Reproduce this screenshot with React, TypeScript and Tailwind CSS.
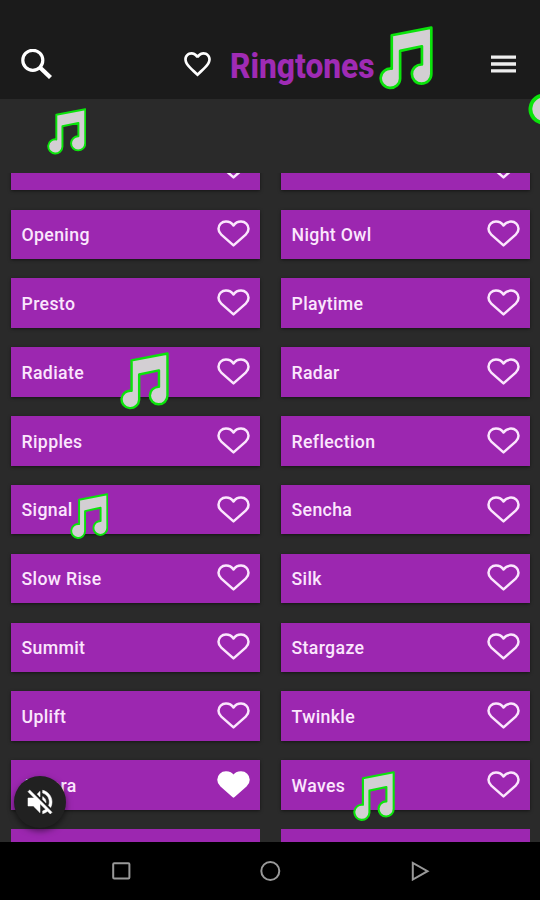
import { useState } from "react";
import { MdFavoriteBorder } from "react-icons/md";

const ringtones = [
  "Opening",
  "Night Owl",
  "Presto",
  "Playtime",
  "Radiate",
  "Radar",
  "Ripples",
  "Reflection",
  "Signal",
  "Sencha",
  "Slow Rise",
  "Silk",
  "Summit",
  "Stargaze",
  "Uplift",
  "Twinkle",
  "Aurora",
  "Waves",
];

function Heart({ filled = false }: { filled?: boolean }) {
  return (
    <svg
      viewBox="0 0 33 27"
      className="h-[27px] w-[33px] shrink-0"
      fill={filled ? "#fff" : "none"}
      stroke={filled ? "#fff" : "#fbe6fd"}
      strokeWidth="2.5"
      strokeLinejoin="round"
    >
      <path d="M16.5 25.4 L4.3 14.6 C2.3 12.8 1.5 11 1.5 8.7 C1.5 4.7 4.8 1.6 9 1.6 C12.2 1.6 14.7 3 16.5 5.5 C18.3 3 20.8 1.6 24 1.6 C28.2 1.6 31.5 4.7 31.5 8.7 C31.5 11 30.7 12.8 28.7 14.6 Z" />
    </svg>
  );
}

function Note({ className }: { className: string }) {
  return (
    <svg
      viewBox="25 33 161 193"
      preserveAspectRatio="none"
      className={`pointer-events-none absolute z-20 ${className}`}
    >
      <path
        d="M63 61 L181 38 V178 A29 29 0 1 1 153 149 V94 L88 108 V192 A29 29 0 1 1 63 162 Z"
        fill="#d3cfd3"
        stroke="#0be30b"
        strokeWidth="8"
        strokeLinejoin="round"
      />
    </svg>
  );
}

function MuteIcon() {
  return (
    <svg viewBox="0 0 24 24" className="size-[32px]" fill="#fff" stroke="#fff" strokeWidth="0.4">
      <path d="M16.5 12c0-1.77-1.02-3.29-2.5-4.03v2.21l2.45 2.45c.03-.2.05-.41.05-.63zm2.5 0c0 .94-.2 1.82-.54 2.64l1.51 1.51C20.63 14.91 21 13.5 21 12c0-4.28-2.99-7.86-7-8.77v2.06c2.89.86 5 3.54 5 6.71zM4.27 3 3 4.27 7.73 9H3v6h4l5 5v-6.73l4.25 4.25c-.67.52-1.42.93-2.25 1.18v2.06c1.38-.31 2.63-.95 3.69-1.81L19.73 21 21 19.73l-9-9L4.27 3zM12 4 9.91 6.09 12 8.18V4z" />
    </svg>
  );
}

function RingtoneCard({
  title,
  liked,
  onLike,
}: {
  title: string;
  liked: boolean;
  onLike: () => void;
}) {
  return (
    <div className="flex h-[49.4px] items-center justify-between bg-[#9c27b0] pr-[10px] pl-[10.5px] shadow-[0_1px_3px_rgba(0,0,0,0.5)]">
      <span className="pt-[1.5px] text-[17.7px] leading-6 font-medium tracking-[0.35px] text-[#fbe6fd]">
        {title}
      </span>
      <button onClick={onLike} className="pb-px">
        <Heart filled={liked} />
      </button>
    </div>
  );
}

export default function App() {
  const [liked, setLiked] = useState<string[]>(["Aurora"]);

  const toggle = (title: string) =>
    setLiked((prev) =>
      prev.includes(title) ? prev.filter((t) => t !== title) : [...prev, title]
    );

  return (
    <div className="relative flex h-[900px] w-[540px] flex-col overflow-hidden bg-[#2a2a2a] font-['Roboto',sans-serif]">
      {/* Header */}
      <header className="flex h-[98.5px] shrink-0 items-center bg-[#1b1b1b] pt-[30px] pr-[24px] pl-[21px]">
        <svg viewBox="0 0 31 30" className="h-[30px] w-[31px]" fill="none" stroke="#fff">
          <circle cx="11.8" cy="11.3" r="10" strokeWidth="3.2" />
          <path d="M19 18.5 L29.5 28.5" strokeWidth="4.3" />
        </svg>
        <MdFavoriteBorder className="ml-[129px] h-[32px] w-[33px] text-white" />
        <h1 className="ml-[15.5px] w-[146px] origin-left scale-x-[0.905] pt-[6px] text-[35px] leading-10 font-extrabold text-[#9f2bb4]">
          Ringtones
        </h1>
        <button className="mb-px ml-auto">
          <svg viewBox="0 0 25 18" className="h-[18px] w-[25px]" fill="none" stroke="#eee" strokeWidth="3.3">
            <path d="M0 2.2 H25 M0 9 H25 M0 15.8 H25" />
          </svg>
        </button>
      </header>

      {/* Ringtone list */}
      <main className="mt-[74px] flex h-[669px] shrink-0 flex-col justify-end overflow-hidden pr-[10px] pl-[11px]">
        <div className="-mb-[37px] grid grid-cols-2 gap-x-[21px] gap-y-[19.45px]">
          <RingtoneCard title="" liked={false} onLike={() => {}} />
          <RingtoneCard title="" liked={false} onLike={() => {}} />
          {ringtones.map((title) => (
            <RingtoneCard
              key={title}
              title={title}
              liked={liked.includes(title)}
              onLike={() => toggle(title)}
            />
          ))}
          <div className="h-[49.4px] bg-[#9c27b0]" />
          <div className="h-[49.4px] bg-[#9c27b0]" />
        </div>
      </main>

      {/* System navigation */}
      <nav className="flex flex-1 items-center bg-black pl-[112px]">
        <svg viewBox="0 0 320 20" className="h-5 w-[320px]" fill="none" stroke="#999" strokeWidth="2">
          <rect x="1.2" y="2.2" width="16.2" height="15.2" rx="1" />
          <circle cx="158.3" cy="10" r="9" />
          <path d="M300.8 2 V18.5 L315.5 10.2 Z" />
        </svg>
      </nav>

      {/* Mute button */}
      <button className="absolute top-[776px] left-[14px] z-10 flex size-[52px] items-center justify-center rounded-full bg-[#212121] shadow-[0_3px_6px_rgba(0,0,0,0.5)]">
        <MuteIcon />
      </button>

      {/* Floating notes */}
      <Note className="top-[26px] left-[378.5px] h-[64px] w-[54px]" />
      <Note className="top-[108px] left-[46.5px] h-[47px] w-[39.5px]" />
      <Note className="top-[34px] left-[527.5px] h-[92px] w-[77px]" />
      <Note className="top-[352px] left-[120px] h-[58px] w-[49px]" />
      <Note className="top-[493px] left-[69.5px] h-[46.5px] w-[38.5px]" />
      <Note className="top-[770.5px] left-[352.5px] h-[50.5px] w-[42px]" />
    </div>
  );
}
